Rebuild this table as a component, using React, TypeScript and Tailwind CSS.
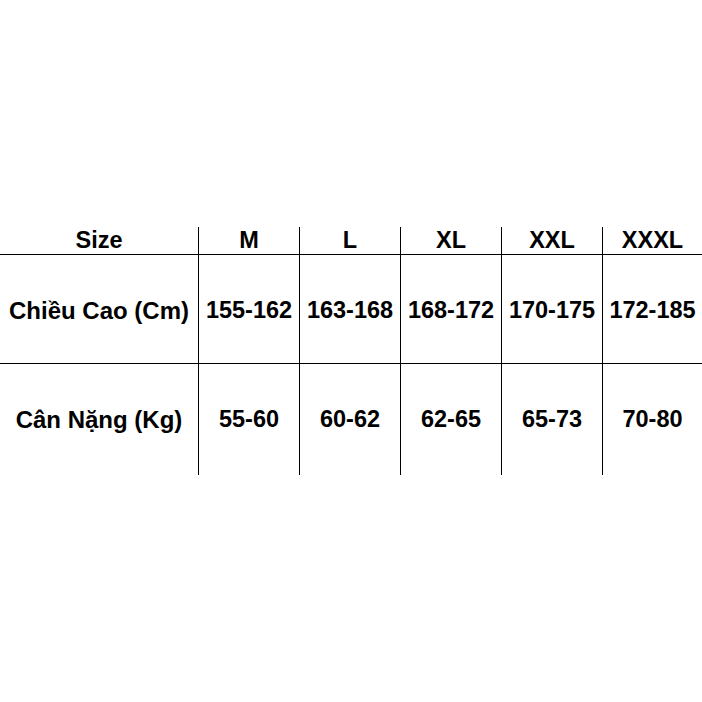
import React from 'react';

const sizes = ['M', 'L', 'XL', 'XXL', 'XXXL'];

const rows = [
  { label: 'Chiều Cao (Cm)', values: ['155-162', '163-168', '168-172', '170-175', '172-185'], h: 'h-[109px] border-b', pad: 'pt-[3px]' },
  { label: 'Cân Nặng (Kg)', values: ['55-60', '60-62', '62-65', '65-73', '70-80'], h: 'h-[111px]', pad: 'pt-[1px]' },
];

const cols = 'grid grid-cols-[198px_101px_101px_101px_101px_100px]';

export default function App() {
  return (
    <div className="w-[702px] h-[702px] bg-white pt-[227px] text-black font-['Liberation_Sans',Arial,sans-serif] font-bold text-[23.5px]">
      {/* header */}
      <div className={`${cols} h-[28px] border-b border-black`}>
        <div className="flex items-center justify-center leading-none">Size</div>
        {sizes.map(s => (
          <div key={s} className="flex items-center justify-center border-l border-black leading-none">
            {s}
          </div>
        ))}
      </div>

      {rows.map(row => (
        <div key={row.label} className={`${cols} ${row.h} border-black`}>
          <div className={`flex items-center justify-center whitespace-nowrap text-[24px] ${row.pad}`}>{row.label}</div>
          {row.values.map((v, i) => (
            <div key={i} className={`flex items-center justify-center border-l border-black whitespace-nowrap ${row.pad}`}>
              {v}
            </div>
          ))}
        </div>
      ))}
    </div>
  );
}
